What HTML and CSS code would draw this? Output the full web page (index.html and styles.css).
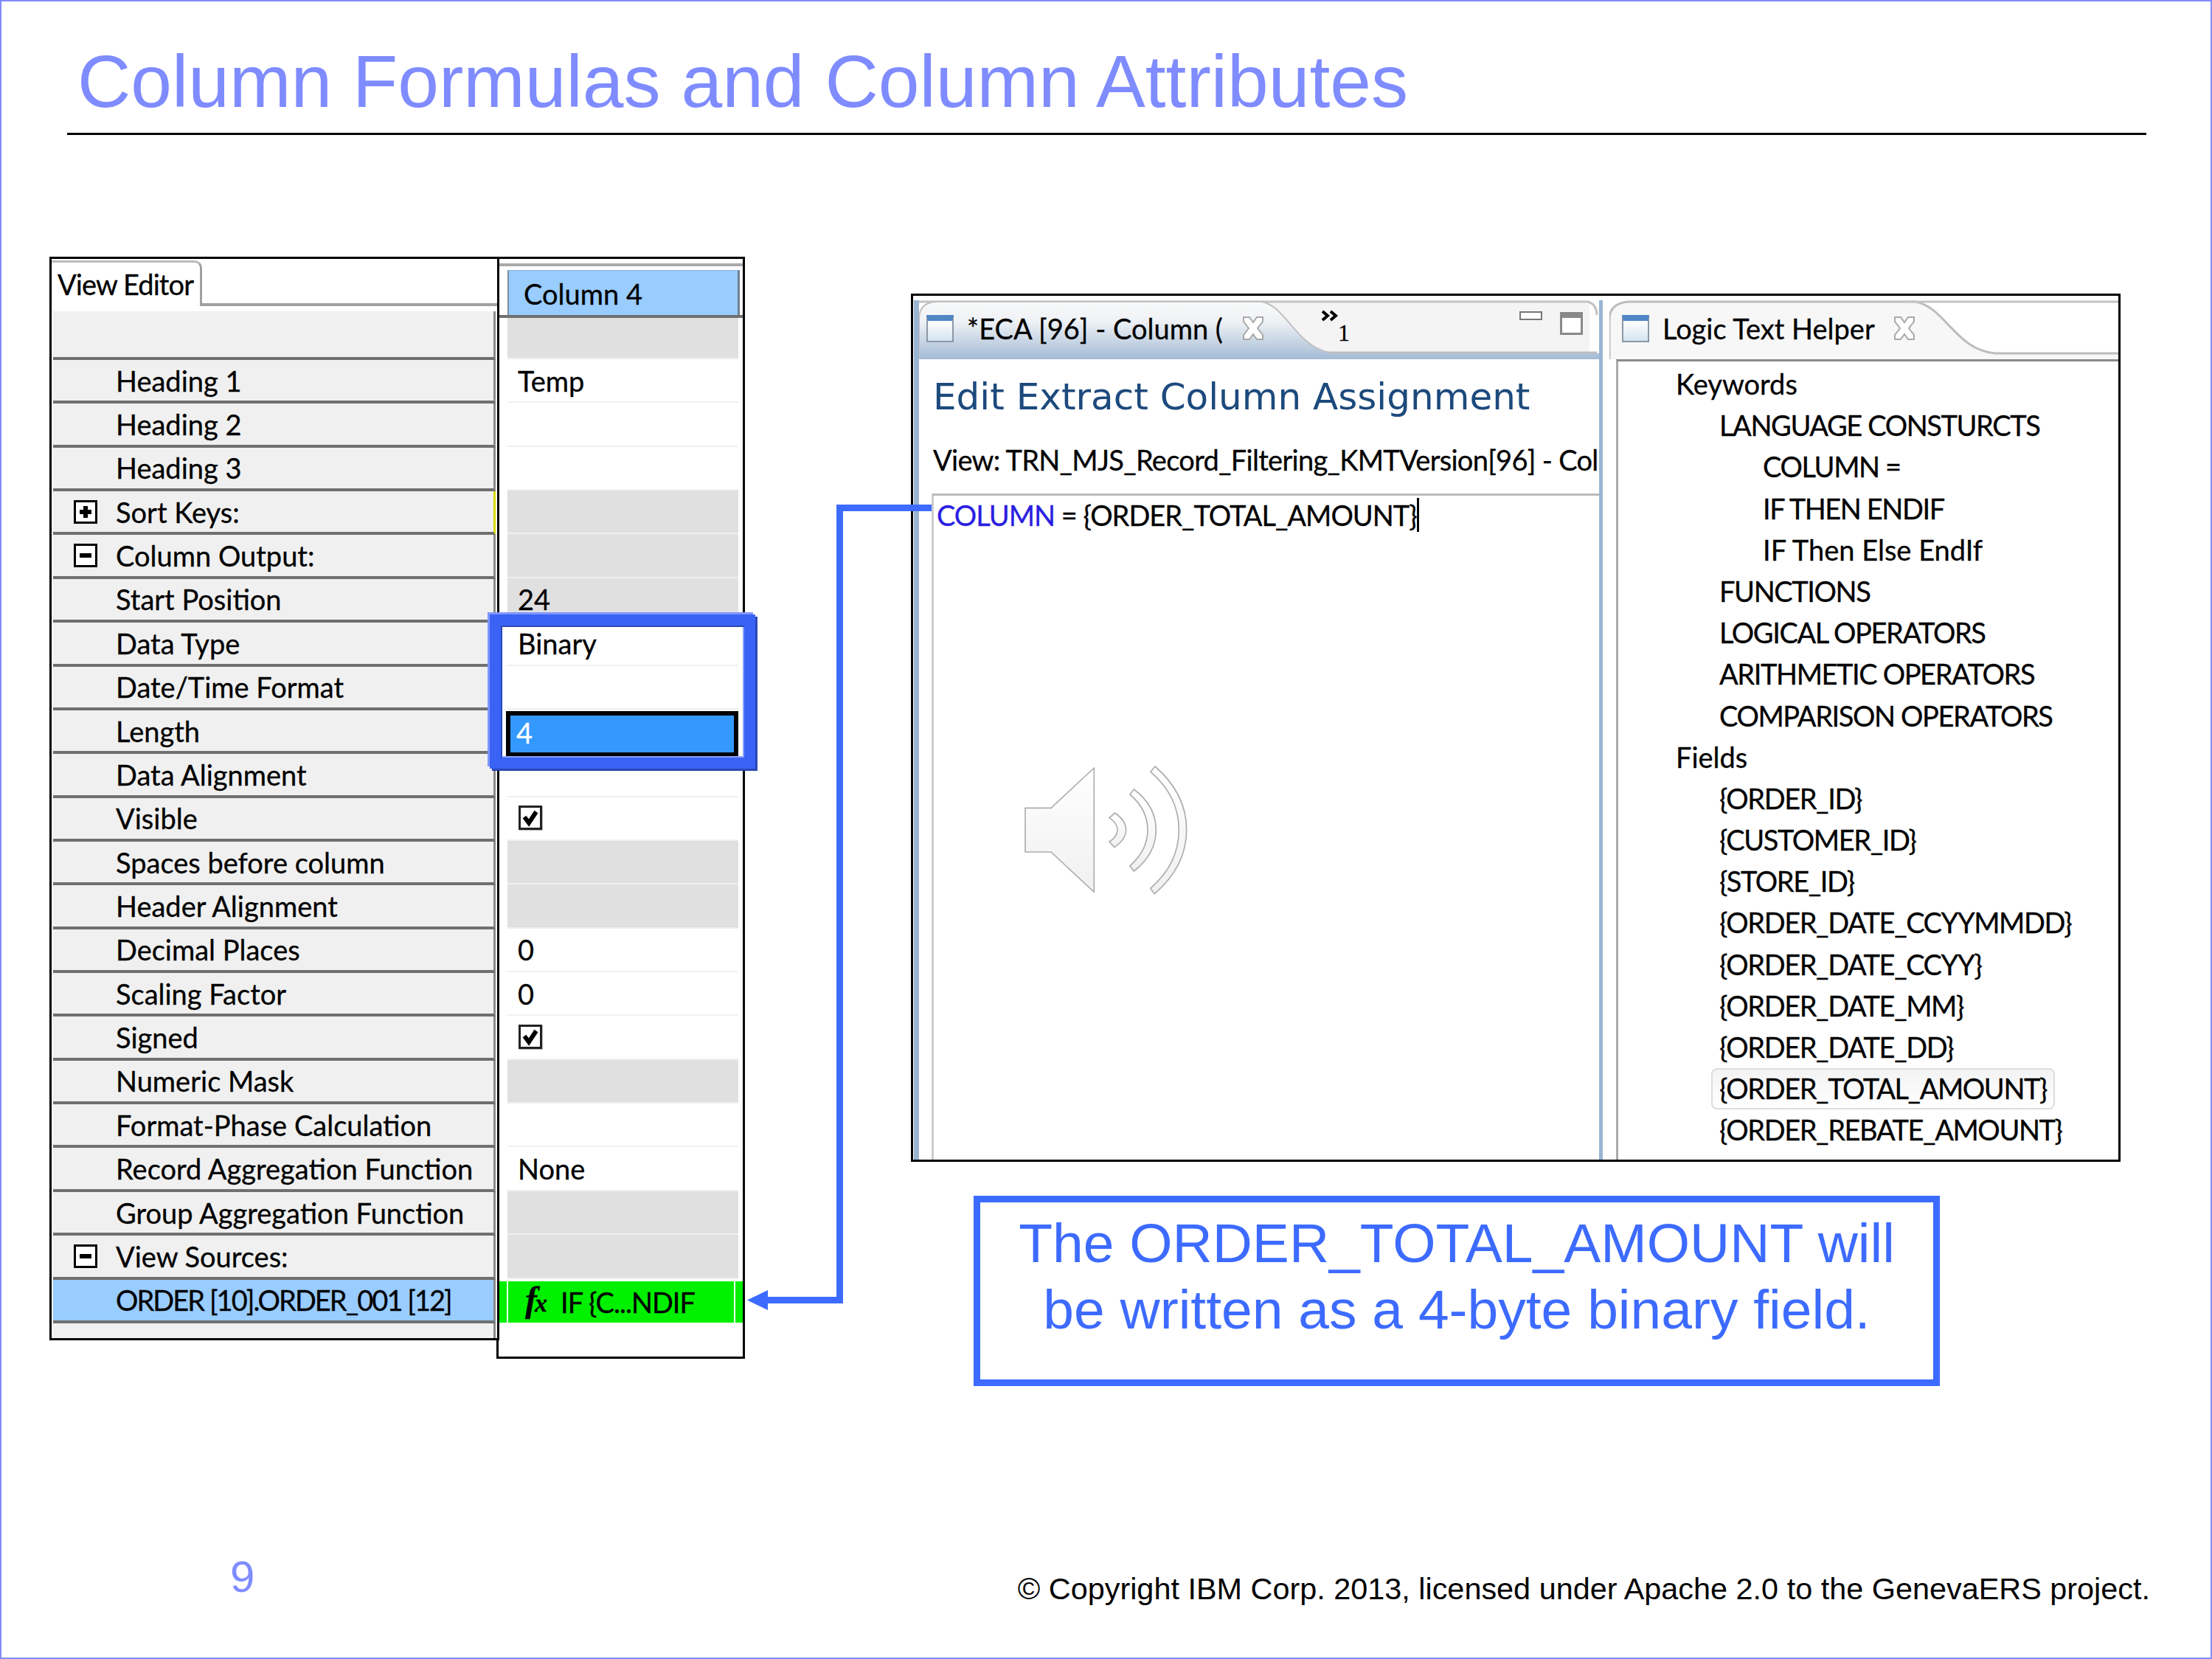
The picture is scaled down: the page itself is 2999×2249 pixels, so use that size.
FILE: index.html
```html
<!DOCTYPE html>
<html lang="en">
<head>
<meta charset="utf-8">
<title>Column Formulas and Column Attributes</title>
<link rel="stylesheet" href="styles.css">
</head>
<body>
<main class="slide">
  <h1 class="title">Column Formulas and Column Attributes</h1>
  <hr class="rule">
  <section class="content">
    <div class="sheet">
      <div class="names">
        <div class="viewtabs"><span class="viewtab">View Editor</span></div>
        <div class="row head"></div>
        <div class="row"><span class="label">Heading 1</span></div>
        <div class="row"><span class="label">Heading 2</span></div>
        <div class="row"><span class="label">Heading 3</span></div>
        <div class="row group mark"><span class="twist plus"></span><span>Sort Keys:</span></div>
        <div class="row group"><span class="twist minus"></span><span>Column Output:</span></div>
        <div class="row"><span class="label">Start Position</span></div>
        <div class="row"><span class="label">Data Type</span></div>
        <div class="row"><span class="label">Date/Time Format</span></div>
        <div class="row"><span class="label">Length</span></div>
        <div class="row"><span class="label">Data Alignment</span></div>
        <div class="row"><span class="label">Visible</span></div>
        <div class="row"><span class="label">Spaces before column</span></div>
        <div class="row"><span class="label">Header Alignment</span></div>
        <div class="row"><span class="label">Decimal Places</span></div>
        <div class="row"><span class="label">Scaling Factor</span></div>
        <div class="row"><span class="label">Signed</span></div>
        <div class="row"><span class="label">Numeric Mask</span></div>
        <div class="row"><span class="label">Format-Phase Calculation</span></div>
        <div class="row"><span class="label">Record Aggregation Function</span></div>
        <div class="row"><span class="label">Group Aggregation Function</span></div>
        <div class="row group"><span class="twist minus"></span><span>View Sources:</span></div>
        <div class="row current"><span class="label caps tight">ORDER [10].ORDER_001 [12]</span></div>
      </div>
      <div class="values">
        <div class="colhead"><span class="coltitle">Column 4</span></div>
        <div class="cell off first"></div>
        <div class="cell">Temp</div>
        <div class="cell"></div>
        <div class="cell"></div>
        <div class="cell off"></div>
        <div class="cell off"></div>
        <div class="cell off">24</div>
        <div class="cell">Binary</div>
        <div class="cell"></div>
        <div class="cell picked"><span class="pickedbox">4</span></div>
        <div class="cell"></div>
        <div class="cell"><span class="check"><svg viewBox="0 0 26 26"><path d="M5 12l6 8L21 5" fill="none" stroke="#000" stroke-width="6"/></svg></span></div>
        <div class="cell off"></div>
        <div class="cell off"></div>
        <div class="cell">0</div>
        <div class="cell">0</div>
        <div class="cell"><span class="check"><svg viewBox="0 0 26 26"><path d="M5 12l6 8L21 5" fill="none" stroke="#000" stroke-width="6"/></svg></span></div>
        <div class="cell off"></div>
        <div class="cell"></div>
        <div class="cell">None</div>
        <div class="cell off"></div>
        <div class="cell off"></div>
        <div class="cell formula"><span class="fx"><i>f</i><i>x</i></span><span class="caps">IF {C...NDIF</span></div>
      </div>
      <div class="focusbox"></div>
    </div>

    <div class="side">
      <div class="shot">
        <div class="pane editor">
          <div class="tabbar">
            <svg class="tabshape" viewBox="0 0 930 80" preserveAspectRatio="none">
              <defs><linearGradient id="tabfill" x1="0" y1="0" x2="0" y2="1"><stop offset="0" stop-color="#fafafa"/><stop offset=".35" stop-color="#eef1f5"/><stop offset="1" stop-color="#a3bbd5"/></linearGradient></defs>
              <path d="M917 0H10V72H917Z" fill="#f4f4f4"/>
              <path d="M0 2H915Q927 6 927 20" fill="none" stroke="#c4c4c4" stroke-width="3"/>
              <path d="M520 71H927" stroke="#bdbdbd" stroke-width="3" fill="none"/>
              <path d="M0 80V26Q0 2 26 2H468C505 8 515 68 570 72H930V80Z" fill="url(#tabfill)"/>
              <path d="M0 80V26Q0 2 26 2H468C505 8 515 68 570 72" fill="none" stroke="#c0c0c0" stroke-width="2"/>
            </svg>
            <span class="winicon"></span>
            <span class="tabtext">*ECA [96] - Column (</span>
            <svg class="tabx" viewBox="0 0 32 36"><path d="M3 3h8l5 7 5-7h8v6l-7 9 7 9v6h-8l-5-7-5 7H3v-6l7-9-7-9z" fill="#fff" stroke="#a8a8a8" stroke-width="2"/></svg>
            <span class="more"><svg class="chevrons" viewBox="0 0 25 16"><path d="M2 2l7 6-7 6M13 2l7 6-7 6" fill="none" stroke="#000" stroke-width="4"/></svg><em>1</em></span>
            <span class="minbtn"></span>
            <span class="maxbtn"></span>
          </div>
          <div class="editbody">
            <h2 class="formtitle">Edit Extract Column Assignment</h2>
            <p class="viewpath">View: TRN_MJS_Record_Filtering_KMTVersion[96] - Col</p>
            <div class="codebox">
              <p class="code"><span class="kw">COLUMN</span> = {ORDER_TOTAL_AMOUNT<span class="caret">}</span></p>
              <svg class="speaker" viewBox="0 0 900 780">
                <defs><linearGradient id="spk" x1="0" y1="0" x2="0" y2="1"><stop offset="0" stop-color="#ffffff"/><stop offset="1" stop-color="#f0f0f0"/></linearGradient></defs>
                <g fill="url(#spk)" stroke="#adadad" stroke-width="5" stroke-linejoin="round">
                  <path d="M150 283H255L430 120V625L255 462H150Z"/>
                  <path d="M515 303Q560 335 560 372Q560 410 513 443L492 420Q525 400 525 372Q525 345 492 323Z"/>
                  <path d="M592 207Q682 275 682 372Q682 470 592 540L576 518Q648 455 648 372Q648 290 576 228Z"/>
                  <path d="M678 114Q806 225 806 372Q806 520 676 632L659 610Q775 510 775 372Q775 235 660 136Z"/>
                </g>
              </svg>
            </div>
          </div>
        </div>
        <div class="pane helper">
          <div class="tabbar">
            <svg class="tabshape" viewBox="0 0 693 80" preserveAspectRatio="none">
              <path d="M0 80V26Q0 4 26 2H410C450 8 465 68 518 72H693V80Z" fill="#f7f7f7"/>
              <path d="M0 80V26Q0 4 26 2H410C450 8 465 68 518 72H693" fill="none" stroke="#bdbdbd" stroke-width="3"/>
              <path d="M400 2H693" fill="none" stroke="#c4c4c4" stroke-width="3"/>
            </svg>
            <span class="winicon"></span>
            <span class="tabtext">Logic Text Helper</span>
            <svg class="tabx" viewBox="0 0 32 36"><path d="M3 3h8l5 7 5-7h8v6l-7 9 7 9v6h-8l-5-7-5 7H3v-6l7-9-7-9z" fill="#fff" stroke="#a8a8a8" stroke-width="2"/></svg>
          </div>
          <ul class="tree">
            <li class="l1">Keywords</li>
            <li class="l2 caps">LANGUAGE CONSTURCTS</li>
            <li class="l3 caps">COLUMN =</li>
            <li class="l3 caps">IF THEN ENDIF</li>
            <li class="l3">IF Then Else EndIf</li>
            <li class="l2 caps">FUNCTIONS</li>
            <li class="l2 caps">LOGICAL OPERATORS</li>
            <li class="l2 caps">ARITHMETIC OPERATORS</li>
            <li class="l2 caps">COMPARISON OPERATORS</li>
            <li class="l1">Fields</li>
            <li class="l2 caps">{ORDER_ID}</li>
            <li class="l2 caps">{CUSTOMER_ID}</li>
            <li class="l2 caps">{STORE_ID}</li>
            <li class="l2 caps">{ORDER_DATE_CCYYMMDD}</li>
            <li class="l2 caps">{ORDER_DATE_CCYY}</li>
            <li class="l2 caps">{ORDER_DATE_MM}</li>
            <li class="l2 caps">{ORDER_DATE_DD}</li>
            <li class="l2 caps"><span class="hover">{ORDER_TOTAL_AMOUNT}</span></li>
            <li class="l2 caps">{ORDER_REBATE_AMOUNT}</li>
          </ul>
        </div>
      </div>
      <p class="callout">The ORDER_TOTAL_AMOUNT will<br>be written as a 4-byte binary field.</p>
    </div>

    <svg class="connector" viewBox="0 0 250 1095">
      <path d="M250 4.5H125.5V1078.5H28" fill="none" stroke="#3d6bff" stroke-width="9"/>
      <path d="M0 1078.5L28 1065V1092Z" fill="#3d6bff"/>
    </svg>
  </section>
  <footer class="foot">
    <span class="pageno">9</span>
    <span class="copy">© Copyright IBM Corp. 2013, licensed under Apache 2.0 to the GenevaERS project.</span>
  </footer>
</main>
</body>
</html>
```

FILE: styles.css
```css
* { box-sizing: border-box; }
html, body { margin: 0; padding: 0; background: #fff; }
body { width: 2999px; height: 2249px; overflow: hidden; }

.slide {
  width: 2999px; height: 2249px;
  border: 2px solid #7f8cff;
  display: flex; flex-direction: column;
  background: #fff;
  font-family: "Lato", "Open Sans", sans-serif;
  color: #000;
  -webkit-text-stroke: .3px currentColor;
}
.title, .callout, .foot { -webkit-text-stroke: 0; }
.title {
  margin: 52px 0 0 103px;
  font: 400 100.2px/112px "Liberation Sans", Arial, sans-serif;
  color: #7f8cff;
  white-space: nowrap;
}
.rule {
  margin: 14px 0 0 89px;
  width: 2819px; height: 3px;
  border: 0; background: #000;
}

.content { position: relative; display: flex; align-items: flex-start; margin: 165px 0 0 65px; }
.caps { letter-spacing: -1.4px; }
.caps.tight { letter-spacing: -1.95px; }

/* property sheet */
.sheet { position: relative; display: flex; align-items: flex-start; font-size: 38px; flex: none; }
.names {
  position: relative; z-index: 1;
  width: 610px; height: 1469px;
  border: 3px solid #000;
  padding: 0 2px;
  background: #fff;
  display: flex; flex-direction: column;
}
.viewtabs {
  height: 71px; flex: none; margin: 0 -2px;
  position: relative;
}
.viewtabs::after {
  content: ""; position: absolute; left: 204px; right: 0; top: 60px; height: 4px; background: #a0a0a0;
}
.viewtab {
  position: absolute; left: 0; top: 2px;
  width: 204px; height: 62px;
  padding: 7px 0 0 8px;
  border-top: 3px solid #bbb;
  border-right: 3px solid #a0a0a0;
  border-top-right-radius: 10px;
  line-height: 44px;
  letter-spacing: -.9px;
  white-space: nowrap;
}
.row {
  height: 59.36px; flex: none;
  display: flex; align-items: center;
  padding-left: 85px;
  background: #f0f0f0;
  border-bottom: 4px solid #6f6f6f;
  border-right: 3px solid #8a8a8a;
  white-space: nowrap;
}
.row.head { height: 66px; }
.row.group { padding-left: 28px; }
.row.mark { border-right-color: #d8d800; }
.row.current { background: #99ccff; }
.names::after { content: ""; flex: 1; background: #f0f0f0; border-right: 3px solid #8a8a8a; }
.twist {
  position: relative; flex: none;
  width: 32px; height: 32px; margin-right: 25px;
  border: 3px solid #000; background: #fff;
}
.twist::before { content: ""; position: absolute; left: 5px; right: 5px; top: 10px; height: 6px; background: #000; }
.plus::after { content: ""; position: absolute; top: 5px; bottom: 5px; left: 10px; width: 6px; background: #000; }

.values {
  width: 337px; height: 1494px;
  margin-left: -4px;
  border: 3px solid #000;
  padding-top: 6px;
  background: #fff;
  display: flex; flex-direction: column;
}
.colhead {
  height: 74px; flex: none;
  border-top: 4px solid #aaa;
  border-bottom: 4px solid #707070;
  padding: 5px 4px 0 12px;
}
.coltitle {
  display: block; height: 61px;
  background: #99ccff;
  border-left: 2px solid #7d8e9e; border-right: 3px solid #6f7f8f; border-top: 1px solid #8fb8e0;
  padding: 8px 0 0 20px; line-height: 46px;
}
.cell {
  height: 59.36px; flex: none;
  margin: 0 6px 0 12px;
  padding: 0 0 0 14px;
  display: flex; align-items: center;
  border-bottom: 2px solid #f0f0f0;
}
.cell.first { height: 56px; }
.cell.off { background: #e0e0e0; border-bottom-color: #eee; }
.cell.picked { position: relative; padding: 0; border: 0; }
.pickedbox {
  position: absolute; left: -2px; right: 0; top: 2px; bottom: -5px;
  border: 6px solid #000; background: #3399ff; color: #fff;
  padding-left: 8px; line-height: 46px;
}
.check {
  width: 32px; height: 33px; border: 3px solid #222; box-shadow: 1px 1px 0 #bbb; display: block; background: #fff; margin: -2px 0 0 1px;
}
.check svg { display: block; width: 26px; height: 27px; }
.cell.formula {
  background: linear-gradient(90deg, #00f000 11px, #fff 11px 13px, #00f000 13px calc(100% - 12px), #fff calc(100% - 12px) calc(100% - 10px), #00f000 calc(100% - 10px));
  margin: 3px 0 0; padding: 0 0 0 36px; gap: 8px; border-bottom: 0; height: 56px;
}
.cell.formula .caps { letter-spacing: -1px; }
.fx { font: 700 48px/44px "Liberation Serif", serif; position: relative; width: 40px; }
.fx i:last-child { font-size: 34px; margin-left: -3px; }

.focusbox {
  position: absolute; left: 597px; top: 485px; z-index: 2;
  width: 360px; height: 209px;
  border: 15px solid #3a63f5;
  box-shadow: 3px 3px 0 #2b48b5, -3px -3px 0 #7f96ff, inset 2px 2px 0 #2b48b5, inset -2px -2px 0 #8aa0ff;
  pointer-events: none;
}

/* right column */
.side { display: flex; flex-direction: column; margin: 50px 0 0 225px; flex: none; }
.shot {
  width: 1640px; height: 1177px;
  border: 3px solid #000;
  background: #fff;
  display: flex;
  padding-top: 6px;
  overflow: hidden;
}
.pane { height: 100%; flex: none; }
.editor { width: 934px; margin-left: 1px; border-left: 7px solid #9ab5d2; border-right: 5px solid #9ab5d2; overflow: hidden; }
.helper { width: 700px; margin-left: 9px; }
.tabbar {
  position: relative;
  height: 80px;
  display: flex; align-items: center;
  padding: 0 0 4px 12px;
  font-size: 38px;
}
.editor .tabbar { padding-left: 10px; }
.tabshape { position: absolute; inset: 0; width: 100%; height: 100%; }
.tabbar > span, .tabx { position: relative; }
.winicon {
  flex: none; width: 37px; height: 37px; margin-right: 18px;
  border: 2px solid #8b98a6;
  border-top: 8px solid #4f86c6;
  background: linear-gradient(#fff, #d5e3f2);
}
.tabtext { white-space: nowrap; }
.editor .tabx { width: 32px; height: 36px; margin-left: 25px; flex: none; }
.more { width: 50px; margin: 13px 0 0 76px; align-self: flex-start; flex: none; }
.chevrons { display: block; width: 25px; height: 16px; }
.more em { display: block; margin-left: 23px; font: 400 32px/30px "Liberation Serif", serif; }
.minbtn { width: 31px; height: 12px; border: 2px solid #777; margin: -34px 0 0 219px; flex: none; background: #fff; }
.maxbtn { width: 31px; height: 31px; border: 3px solid #888; border-top-width: 8px; margin: -14px 0 0 24px; flex: none; background: #fff; }

.editbody { padding: 0 0 0 19px; background: #fff; height: 1100px; }
.formtitle {
  margin: 0; padding-top: 16px;
  font: 400 50px/70px "DejaVu Sans", sans-serif;
  color: #1c4a7d;
  white-space: nowrap;
  -webkit-text-stroke: 0;
}
.viewpath { margin: 25px 0 0; font-size: 38px; line-height: 50px; white-space: nowrap; letter-spacing: -.7px; }
.codebox { margin: 21px 0 0 -2px; border-top: 3px solid #bbb; border-left: 3px solid #ccc; height: 960px; }
.code { margin: 0; padding: 1px 0 0 4px; font-size: 38px; line-height: 50px; white-space: nowrap; letter-spacing: -1px; }
.kw { color: #2a1ee0; }
.caret { border-right: 3px solid #000; }
.speaker { display: block; width: 300px; height: 260px; margin: 278px 0 0 74px; }

.helper .tabbar { padding-left: 17px; }
.helper .tabx { width: 32px; height: 36px; margin-left: 24px; flex: none; }
.tree {
  list-style: none; margin: 0 0 0 9px; padding: 2px 0 0 0;
  border-top: 3px solid #8a8a8a;
  border-left: 3px solid #aaa;
  height: 1090px;
  font-size: 38px;
}
.tree li { height: 56.2px; line-height: 56px; white-space: nowrap; }
.l1 { padding-left: 78px; }
.l2 { padding-left: 137px; }
.l3 { padding-left: 196px; }
.hover {
  display: inline-block; height: 56px; line-height: 50px; margin-left: -11px; padding: 0 9px;
  border: 2px solid #ddd; border-radius: 8px;
  background: linear-gradient(#f3f3f3, #fff);
}

.callout {
  align-self: flex-start;
  margin: 46px 0 0 85px;
  width: 1310px; height: 258px;
  border: 9px solid #3d6bff;
  padding: 10px 0 0;
  text-align: center;
  font: 400 75px/90px "Liberation Sans", Arial, sans-serif;
  color: #3d6bff;
}

.connector { position: absolute; left: 946px; top: 336px; width: 250px; height: 1095px; overflow: visible; z-index: 3; }

.foot { display: flex; align-items: flex-end; justify-content: space-between; margin-top: auto; padding: 0 82px 68px 310px; }
.pageno { font: 400 60px/70px "Liberation Sans", Arial, sans-serif; color: #7f8cff; margin-bottom: 6px; }
.copy { font: 400 41.4px/50px "Liberation Sans", Arial, sans-serif; color: #000; white-space: nowrap; }
```
